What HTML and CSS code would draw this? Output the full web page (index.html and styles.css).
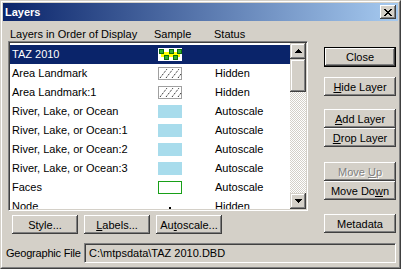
FILE: index.html
```html
<!DOCTYPE html>
<html lang="en">
<head>
  <meta charset="UTF-8" />
  <title>Layers</title>
  <link rel="stylesheet" href="styles.css">
</head>
<body>

  <div class="window">
    <div class="frame">

      <div class="caption">
        <span class="caption-title">Layers</span>
        <span class="caption-close">
          <svg width="8" height="7" viewBox="0 0 8 7" shape-rendering="crispEdges">
            <path d="M0 0h2v1h1v1h2v-1h1v-1h2v1h-1v1h-1v1h-1v1h1v1h1v1h1v1h-2v-1h-1v-1h-2v1h-1v1h-2v-1h1v-1h1v-1h1v-1h-1v-1h-1v-1h-1z" fill="#000"/>
          </svg>
        </span>
      </div>

      <div class="client">
        <div class="main">

          <div class="layers">
            <div class="layers-head">
              <span>Layers in Order of Display</span>
              <span>Sample</span>
              <span>Status</span>
            </div>

            <div class="listbox">
              <div class="rows">
                <div class="row selected">
                  <span class="name">TAZ 2010</span>
                  <span class="sample">
                    <svg width="24" height="13" viewBox="0 0 24 13" shape-rendering="crispEdges">
                      <rect width="24" height="13" fill="#fff"/>
                      <path d="M3 4h19v5h-19z" fill="#ffff00"/>
                      <path d="M1 1h5v5h-5zM11 1h5v5h-5zM19 1h5v5h-5zM6 7h5v5h-5zM15 7h5v5h-5z" fill="#0c6e0c"/>
                      <path d="M2 2h3v3h-3zM12 2h3v3h-3zM20 2h3v3h-3zM7 8h3v3h-3zM16 8h3v3h-3z" fill="#34b034"/>
                    </svg>
                  </span>
                  <span class="status"></span>
                </div>
                <div class="row">
                  <span class="name">Area Landmark</span>
                  <span class="sample">
                    <svg width="24" height="13" viewBox="0 0 24 13">
                      <rect x="0.5" y="0.5" width="23" height="12" fill="#fff" stroke="#a0a0a0"/>
                      <path d="M2 11L9 2M8 11L15 2M14 11L21 2M20 11L23 7" stroke="#000" stroke-width="1" stroke-dasharray="1 1"/>
                    </svg>
                  </span>
                  <span class="status">Hidden</span>
                </div>
                <div class="row">
                  <span class="name">Area Landmark:1</span>
                  <span class="sample">
                    <svg width="24" height="13" viewBox="0 0 24 13">
                      <rect x="0.5" y="0.5" width="23" height="12" fill="#fff" stroke="#a0a0a0"/>
                      <path d="M2 11L9 2M8 11L15 2M14 11L21 2M20 11L23 7" stroke="#000" stroke-width="1" stroke-dasharray="1 1"/>
                    </svg>
                  </span>
                  <span class="status">Hidden</span>
                </div>
                <div class="row">
                  <span class="name">River, Lake, or Ocean</span>
                  <span class="sample"><span class="swatch water"></span></span>
                  <span class="status">Autoscale</span>
                </div>
                <div class="row">
                  <span class="name">River, Lake, or Ocean:1</span>
                  <span class="sample"><span class="swatch water"></span></span>
                  <span class="status">Autoscale</span>
                </div>
                <div class="row">
                  <span class="name">River, Lake, or Ocean:2</span>
                  <span class="sample"><span class="swatch water"></span></span>
                  <span class="status">Autoscale</span>
                </div>
                <div class="row">
                  <span class="name">River, Lake, or Ocean:3</span>
                  <span class="sample"><span class="swatch water"></span></span>
                  <span class="status">Autoscale</span>
                </div>
                <div class="row">
                  <span class="name">Faces</span>
                  <span class="sample"><span class="swatch faces"></span></span>
                  <span class="status">Autoscale</span>
                </div>
                <div class="row">
                  <span class="name">Node</span>
                  <span class="sample"><span class="node-dot"></span></span>
                  <span class="status">Hidden</span>
                </div>
              </div>

              <div class="scrollbar">
                <span class="sb-btn">
                  <svg width="7" height="4" viewBox="0 0 7 4" shape-rendering="crispEdges"><path d="M3 0h1v1h1v1h1v1h1v1h-7v-1h1v-1h1v-1h1z" fill="#000"/></svg>
                </span>
                <span class="sb-thumb"></span>
                <span class="sb-track"></span>
                <span class="sb-btn">
                  <svg width="7" height="4" viewBox="0 0 7 4" shape-rendering="crispEdges"><path d="M0 0h7v1h-1v1h-1v1h-1v1h-1v-1h-1v-1h-1v-1h-1z" fill="#000"/></svg>
                </span>
              </div>
            </div>

            <div class="layer-actions">
              <button class="btn wide">Style...</button>
              <button class="btn wide"><u>L</u>abels...</button>
              <button class="btn wide">Au<u>t</u>oscale...</button>
            </div>
          </div>

          <div class="side">
            <button class="btn default">Close</button>
            <button class="btn hide-btn"><u>H</u>ide Layer</button>
            <button class="btn add-btn"><u>A</u>dd Layer</button>
            <button class="btn"><u>D</u>rop Layer</button>
            <button class="btn up-btn disabled">Move <u>U</u>p</button>
            <button class="btn">Move Do<u>w</u>n</button>
            <button class="btn meta-btn">Metadata</button>
          </div>

        </div>

        <div class="file-row">
          <span class="file-label">Geographic File</span>
          <div class="file-field">C:\mtpsdata\TAZ 2010.DBD</div>
        </div>
      </div>

    </div>
  </div>

</body>
</html>
```

FILE: styles.css
```css
body {
  margin: 0;
  font-family: 'Liberation Sans', Arial, sans-serif;
  font-size: 11px;
  color: #000;
  background: #d4d0c8;
}

.window {
  width: 401px;
  height: 269px;
  box-sizing: border-box;
  border: 1px solid;
  border-color: #d4d0c8 #404040 #404040 #d4d0c8;
  background: #d4d0c8;
}

.frame {
  height: 100%;
  box-sizing: border-box;
  border: 1px solid;
  border-color: #fff #808080 #808080 #fff;
  padding: 1px;
}

/* title bar */
.caption {
  height: 18px;
  display: flex;
  align-items: center;
  justify-content: space-between;
  padding-left: 2px;
  padding-right: 2px;
  background: linear-gradient(to right, #0a246a, #a6caf0);
}

.caption-title {
  color: #fff;
  font-weight: bold;
  font-size: 11px;
}

.caption-close {
  width: 16px;
  height: 14px;
  box-sizing: border-box;
  display: flex;
  align-items: center;
  justify-content: center;
  background: #d4d0c8;
  box-shadow: inset -1px -1px #404040, inset 1px 1px #fff, inset -2px -2px #808080;
}

.client {
  margin-top: 1px;
}

.main {
  display: grid;
  grid-template-columns: 300px 72px;
  column-gap: 16px;
  padding-left: 5px;
}

.layers {
  display: flex;
  flex-direction: column;
}

.layers-head {
  display: grid;
  grid-template-columns: 144px 60px 1fr;
  padding-left: 2px;
  padding-top: 6px;
  height: 13px;
  line-height: 13px;
}

/* list box */
.listbox {
  height: 170px;
  box-sizing: border-box;
  border: 1px solid;
  border-color: #808080 #fff #fff #808080;
  box-shadow: inset 1px 1px #404040, inset -1px -1px #d4d0c8;
  padding: 1px;
  background: #fff;
  display: flex;
}

.rows {
  flex: 1;
  overflow: hidden;
  padding-top: 2px;
}

.row {
  display: grid;
  grid-template-columns: 148px 57px 1fr;
  align-items: center;
  height: 19px;
  line-height: 19px;
  white-space: nowrap;
}

.row.selected {
  background: #0a246a;
  color: #fff;
}

.name {
  padding-left: 2px;
}

.sample {
  display: flex;
  align-items: center;
  height: 19px;
}

.swatch {
  width: 24px;
  height: 13px;
  box-sizing: border-box;
}

.water {
  background: #a8dcec;
}

.faces {
  border: 1px solid #18a018;
  background: #fff;
}

.node-dot {
  width: 2px;
  height: 2px;
  margin-left: 11px;
  margin-top: 2px;
  background: #000;
}

.scrollbar {
  width: 16px;
  display: flex;
  flex-direction: column;
}

.sb-btn,
.sb-thumb {
  height: 16px;
  box-sizing: border-box;
  display: flex;
  align-items: center;
  justify-content: center;
  background: #d4d0c8;
  box-shadow: inset -1px -1px #404040, inset 1px 1px #d4d0c8, inset -2px -2px #808080, inset 2px 2px #fff;
}

.sb-thumb {
  height: 33px;
}

.sb-track {
  flex: 1;
  background: repeating-conic-gradient(#fff 0 25%, #d4d0c8 0 50%) 0 0 / 2px 2px;
}

/* buttons */
.btn {
  width: 72px;
  height: 19px;
  padding: 0;
  border: none;
  font-family: 'Liberation Sans', Arial, sans-serif;
  font-size: 11px;
  color: #000;
  background: #d4d0c8;
  box-shadow: inset -1px -1px #404040, inset 1px 1px #fff, inset -2px -2px #808080, inset 2px 2px #d4d0c8;
}

.btn.default {
  border: 1px solid #000;
  height: 20px;
}

.btn.wide {
  width: 66px;
}

.btn.disabled {
  color: #808080;
  text-shadow: 1px 1px #fff;
}

.layer-actions {
  display: flex;
  gap: 6px;
  padding-left: 4px;
  margin-top: 4px;
}

.side {
  display: flex;
  flex-direction: column;
  padding-top: 25px;
}

.hide-btn {
  margin-top: 10px;
}

.add-btn {
  margin-top: 13px;
}

.up-btn {
  margin-top: 15px;
}

.meta-btn {
  margin-top: 14px;
}

/* bottom row */
.file-row {
  display: flex;
  align-items: center;
  margin-top: 9px;
  padding-left: 3px;
}

.file-label {
  width: 78px;
  letter-spacing: -0.2px;
}

.file-field {
  width: 312px;
  height: 20px;
  box-sizing: border-box;
  line-height: 18px;
  padding-left: 4px;
  border: 1px solid;
  border-color: #808080 #fff #fff #808080;
  box-shadow: inset 1px 1px #404040, inset -1px -1px #d4d0c8;
  white-space: nowrap;
}
```
